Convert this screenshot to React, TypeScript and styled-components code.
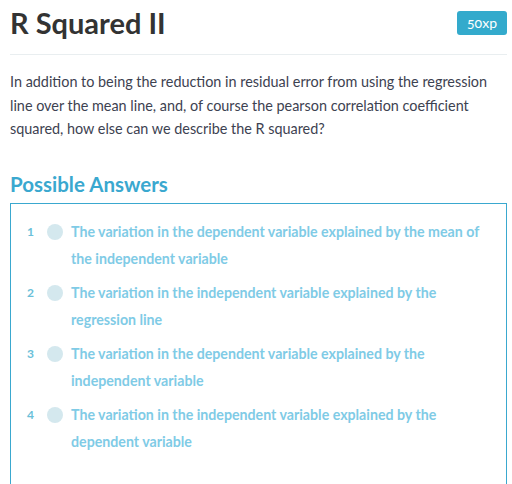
import React from "react";
import styled, { createGlobalStyle } from "styled-components";

const GlobalStyle = createGlobalStyle`
    body {
        margin: 0;
        background: #fff;
        font-family: Lato, "Open Sans", sans-serif;
    }
`;

const Page = styled.div`
    padding: 0 5px 0 10px;
`;

const Header = styled.header`
    display: flex;
    align-items: flex-start;
    justify-content: space-between;
    height: 54px;
    border-bottom: 1px solid #e9eef0;
`;

const Title = styled.h1`
    margin: 5px 0 0;
    font-size: 29px;
    line-height: 36px;
    font-weight: 700;
    color: #333;
`;

const Badge = styled.span`
    margin-top: 11px;
    padding: 0 10px;
    height: 24px;
    line-height: 24px;
    border-radius: 3px;
    background: #33aacc;
    color: #fff;
    font-size: 14px;
    font-variant-numeric: oldstyle-nums;
`;

const Prompt = styled.p`
    margin: 15px 0 0;
    font-size: 14.4px;
    line-height: 23.5px;
    color: #3d4251;
`;

const SectionTitle = styled.h2`
    margin: 30px 0 6px;
    font-size: 20.5px;
    line-height: 26px;
    font-weight: 700;
    color: #3aa8cf;
`;

const Answers = styled.ol`
    list-style: none;
    margin: 0;
    padding: 14px 20px 40px 16px;
    border: 1px solid #3aa8cf;
    display: flex;
    flex-direction: column;
    gap: 7px;
`;

const Answer = styled.li`
    display: grid;
    grid-template-columns: 20px 24px 1fr;
    align-items: start;
`;

const Num = styled.span`
    font-size: 12px;
    font-weight: 700;
    line-height: 27px;
    color: #6bbfd9;
`;

const Dot = styled.span`
    width: 16px;
    height: 16px;
    margin-top: 6px;
    border-radius: 50%;
    background: #d4e8ee;
`;

const AnswerText = styled.span`
    font-size: 14.2px;
    font-weight: 700;
    line-height: 27px;
    color: #7fcbe6;
`;

const answers = [
    "The variation in the dependent variable explained by the mean of the independent variable",
    "The variation in the independent variable explained by the regression line",
    "The variation in the dependent variable explained by the independent variable",
    "The variation in the independent variable explained by the dependent variable",
];

export default function App() {
    return (
        <Page>
            <GlobalStyle />
            <Header>
                <Title>R Squared II</Title>
                <Badge>50xp</Badge>
            </Header>
            <Prompt>
                In addition to being the reduction in residual error from using the regression
                line over the mean line, and, of course the pearson correlation coefficient
                squared, how else can we describe the R squared?
            </Prompt>
            <SectionTitle>Possible Answers</SectionTitle>
            <Answers>
                {answers.map((a, i) => (
                    <Answer key={i}>
                        <Num>{i + 1}</Num>
                        <Dot />
                        <AnswerText>{a}</AnswerText>
                    </Answer>
                ))}
            </Answers>
        </Page>
    );
}
